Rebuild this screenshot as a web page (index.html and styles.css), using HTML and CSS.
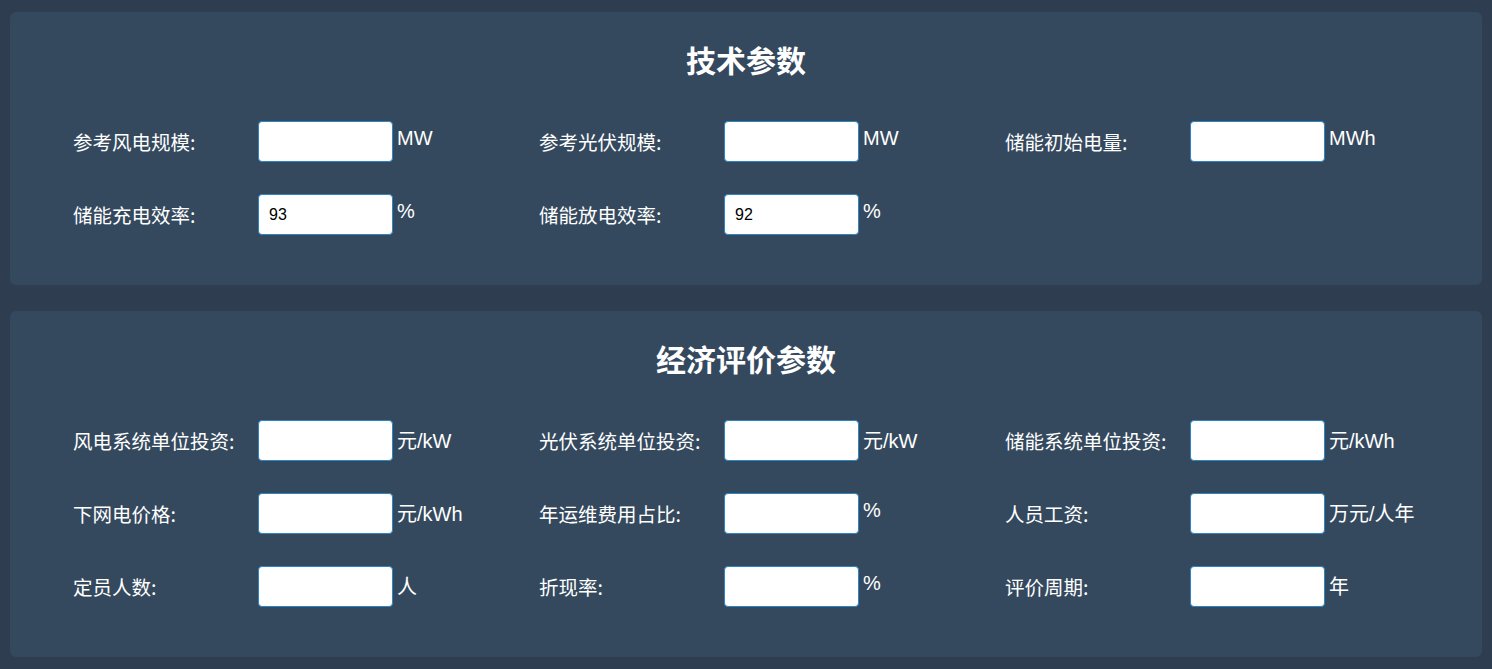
FILE: index.html
```html
<!DOCTYPE html>
<html lang="zh-CN">
<head>
    <meta charset="UTF-8">
    <meta name="viewport" content="width=device-width, initial-scale=1.0">
    <title>参数设置</title>
    <link rel="stylesheet" href="styles.css">
</head>
<body>
    <!-- 技术参数 -->
    <section class="card">
        <h2>技术参数</h2>
        <div class="form-grid">
            <div class="form-group">
                <label for="windScale">参考风电规模:</label>
                <input type="text" id="windScale">
                <span class="unit unit-latin">MW</span>
            </div>
            <div class="form-group">
                <label for="pvScale">参考光伏规模:</label>
                <input type="text" id="pvScale">
                <span class="unit unit-latin">MW</span>
            </div>
            <div class="form-group">
                <label for="initEnergy">储能初始电量:</label>
                <input type="text" id="initEnergy">
                <span class="unit unit-latin">MWh</span>
            </div>
            <div class="form-group">
                <label for="chargeEff">储能充电效率:</label>
                <input type="text" id="chargeEff" value="93">
                <span class="unit unit-latin">%</span>
            </div>
            <div class="form-group">
                <label for="dischargeEff">储能放电效率:</label>
                <input type="text" id="dischargeEff" value="92">
                <span class="unit unit-latin">%</span>
            </div>
        </div>
    </section>

    <!-- 经济评价参数 -->
    <section class="card">
        <h2>经济评价参数</h2>
        <div class="form-grid">
            <div class="form-group">
                <label for="windInvest">风电系统单位投资:</label>
                <input type="text" id="windInvest">
                <span class="unit">元/kW</span>
            </div>
            <div class="form-group">
                <label for="pvInvest">光伏系统单位投资:</label>
                <input type="text" id="pvInvest">
                <span class="unit">元/kW</span>
            </div>
            <div class="form-group">
                <label for="storageInvest">储能系统单位投资:</label>
                <input type="text" id="storageInvest">
                <span class="unit">元/kWh</span>
            </div>
            <div class="form-group">
                <label for="gridPrice">下网电价格:</label>
                <input type="text" id="gridPrice">
                <span class="unit">元/kWh</span>
            </div>
            <div class="form-group">
                <label for="omRatio">年运维费用占比:</label>
                <input type="text" id="omRatio">
                <span class="unit unit-latin">%</span>
            </div>
            <div class="form-group">
                <label for="salary">人员工资:</label>
                <input type="text" id="salary">
                <span class="unit">万元/人年</span>
            </div>
            <div class="form-group">
                <label for="staff">定员人数:</label>
                <input type="text" id="staff">
                <span class="unit">人</span>
            </div>
            <div class="form-group">
                <label for="discount">折现率:</label>
                <input type="text" id="discount">
                <span class="unit unit-latin">%</span>
            </div>
            <div class="form-group">
                <label for="period">评价周期:</label>
                <input type="text" id="period">
                <span class="unit">年</span>
            </div>
        </div>
    </section>
</body>
</html>
```

FILE: styles.css
```css
body {
    margin: 0;
    padding: 12px 10px;
    background-color: #2e3e50;
    color: #ffffff;
    font-family: "Liberation Sans", "Noto Sans CJK SC", sans-serif;
    font-size: 20px;
}

.card {
    background-color: #34495e;
    border-radius: 6px;
    padding: 30px 37px 50px;
    margin-bottom: 26px;
}
.card:last-child {
    margin-bottom: 0;
}

.card h2 {
    margin: 0 0 45px;
    text-align: center;
    font-size: 30px;
    line-height: 34px;
    font-weight: bold;
    font-family: "Noto Sans CJK SC", sans-serif;
}

.form-grid {
    display: grid;
    grid-template-columns: repeat(3, 1fr);
    row-gap: 32px;
}

.form-group {
    display: flex;
    align-items: center;
    padding-left: 26px;
}

.form-group label {
    width: 185px;
    flex-shrink: 0;
    font-family: "Noto Sans CJK SC", sans-serif;
    font-size: 19.5px;
    line-height: 24px;
}

.form-group input {
    box-sizing: border-box;
    width: 135px;
    height: 41px;
    padding: 8px 10px;
    border: 1px solid #2c86c4;
    border-radius: 4px;
    background-color: #ffffff;
    color: #000000;
    font-family: "Liberation Sans", sans-serif;
    font-size: 16px;
    outline: none;
}

.unit {
    margin-left: 4px;
    line-height: 24px;
}
/* 纯英文单位在原图中略偏上 */
.unit-latin {
    position: relative;
    top: -4px;
}
```
